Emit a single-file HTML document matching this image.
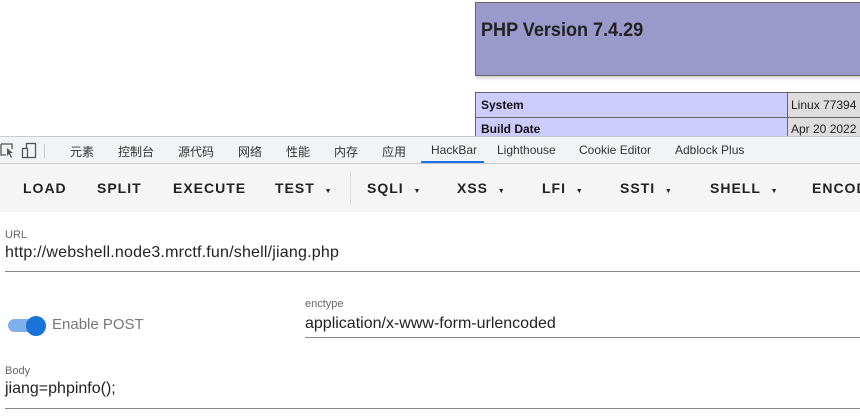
<!DOCTYPE html>
<html><head><meta charset="utf-8"><style>
*{margin:0;padding:0;box-sizing:border-box}
body{width:860px;height:417px;overflow:hidden;background:#fff;font-family:"Liberation Sans","Noto Sans CJK SC",sans-serif;position:relative}
.a{position:absolute;white-space:nowrap}
</style></head><body>
<div class="a" style="left:475px;top:2px;width:400px;height:74px;background:#9999cc;border:1px solid #666;box-shadow:1px 2px 3px #ccc"></div>
<div class="a" style="left:481px;top:20px;font-size:19px;font-weight:bold;color:#222;transform:scaleX(.95);transform-origin:left">PHP Version 7.4.29</div>
<div class="a" style="left:475px;top:92px;width:400px;height:45px;border:1px solid #666;background:#ccf"></div>
<div class="a" style="left:787px;top:93px;width:80px;height:44px;background:#ddd;border-left:1px solid #666"></div>
<div class="a" style="left:476px;top:117px;width:400px;border-top:1px solid #666"></div>
<div class="a" style="left:481px;top:98px;font-size:12px;font-weight:bold;color:#111">System</div>
<div class="a" style="left:481px;top:122px;font-size:12px;font-weight:bold;color:#111">Build Date</div>
<div class="a" style="left:791px;top:98px;font-size:12px;color:#222">Linux 77394</div>
<div class="a" style="left:791px;top:122px;font-size:12px;color:#222">Apr 20 2022</div>

<div class="a" style="left:0;top:136px;width:860px;height:28px;background:#f1f3f4;border-top:1px solid #ccc;border-bottom:1px solid #ccc"></div>
<svg class="a" style="left:0;top:142px" width="46" height="18"><path d="M1 2h11v5M1 2v11h5" fill="none" stroke="#555" stroke-width="1.3"/><path d="M7 6l6 5-3 0 2 4-1 1-2-4-2 2z" fill="#555"/><rect x="26.5" y="1.5" width="9" height="14" fill="none" stroke="#555" stroke-width="1.3"/><rect x="22.5" y="6.5" width="5" height="9" fill="#f1f3f4" stroke="#555" stroke-width="1.3"/><line x1="44.5" y1="2" x2="44.5" y2="16" stroke="#ccc"/></svg>
<div class="a" style="top:143px;left:0;font-size:12px;color:#333">
<span class="a" style="left:70px">元素</span><span class="a" style="left:118px">控制台</span><span class="a" style="left:178px">源代码</span><span class="a" style="left:238px">网络</span><span class="a" style="left:286px">性能</span><span class="a" style="left:334px">内存</span><span class="a" style="left:382px">应用</span><span class="a" style="left:431px">HackBar</span><span class="a" style="left:497px">Lighthouse</span><span class="a" style="left:579px">Cookie Editor</span><span class="a" style="left:675px">Adblock Plus</span></div>
<div class="a" style="left:421px;top:161px;width:63px;height:2px;background:#1a73e8"></div>

<div class="a" style="left:0;top:164px;width:860px;height:48px;background:#f5f5f5"></div>
<div class="a" style="left:350px;top:172px;width:1px;height:32px;background:#ddd"></div>
<div class="a" style="top:180px;left:0;font-size:14px;color:#222;letter-spacing:1px;font-weight:bold;-webkit-text-stroke:0">
<span class="a" style="left:23px">LOAD</span><span class="a" style="left:97px">SPLIT</span><span class="a" style="left:173px">EXECUTE</span><span class="a" style="left:275px">TEST&nbsp; <small style="font-size:7px">▼</small></span><span class="a" style="left:367px">SQLI&nbsp; <small style="font-size:7px">▼</small></span><span class="a" style="left:457px">XSS&nbsp; <small style="font-size:7px">▼</small></span><span class="a" style="left:542px">LFI&nbsp; <small style="font-size:7px">▼</small></span><span class="a" style="left:620px">SSTI&nbsp; <small style="font-size:7px">▼</small></span><span class="a" style="left:710px">SHELL&nbsp; <small style="font-size:7px">▼</small></span><span class="a" style="left:812px">ENCODING</span></div>

<div class="a" style="left:5px;top:229px;font-size:11px;color:#666">URL</div>
<div class="a" style="left:5px;top:244px;font-size:16px;color:#222;letter-spacing:.2px">http://webshell.node3.mrctf.fun/shell/jiang.php</div>
<div class="a" style="left:5px;top:271px;width:855px;height:1px;background:#8a8a8a"></div>

<div class="a" style="left:8px;top:319px;width:34px;height:13px;border-radius:7px;background:#7fb0ec"></div>
<div class="a" style="left:26px;top:316px;width:20px;height:20px;border-radius:50%;background:#1a73d8"></div>
<div class="a" style="left:52px;top:316px;font-size:15px;color:#777">Enable POST</div>
<div class="a" style="left:305px;top:298px;font-size:11px;color:#666">enctype</div>
<div class="a" style="left:305px;top:315px;font-size:16px;color:#222">application/x-www-form-urlencoded</div>
<div class="a" style="left:305px;top:337px;width:555px;height:1px;background:#8a8a8a"></div>

<div class="a" style="left:5px;top:365px;font-size:11px;color:#666">Body</div>
<div class="a" style="left:5px;top:380px;font-size:16px;color:#222">jiang=phpinfo();</div>
<div class="a" style="left:5px;top:408px;width:855px;height:1px;background:#8a8a8a"></div>
</body></html>
